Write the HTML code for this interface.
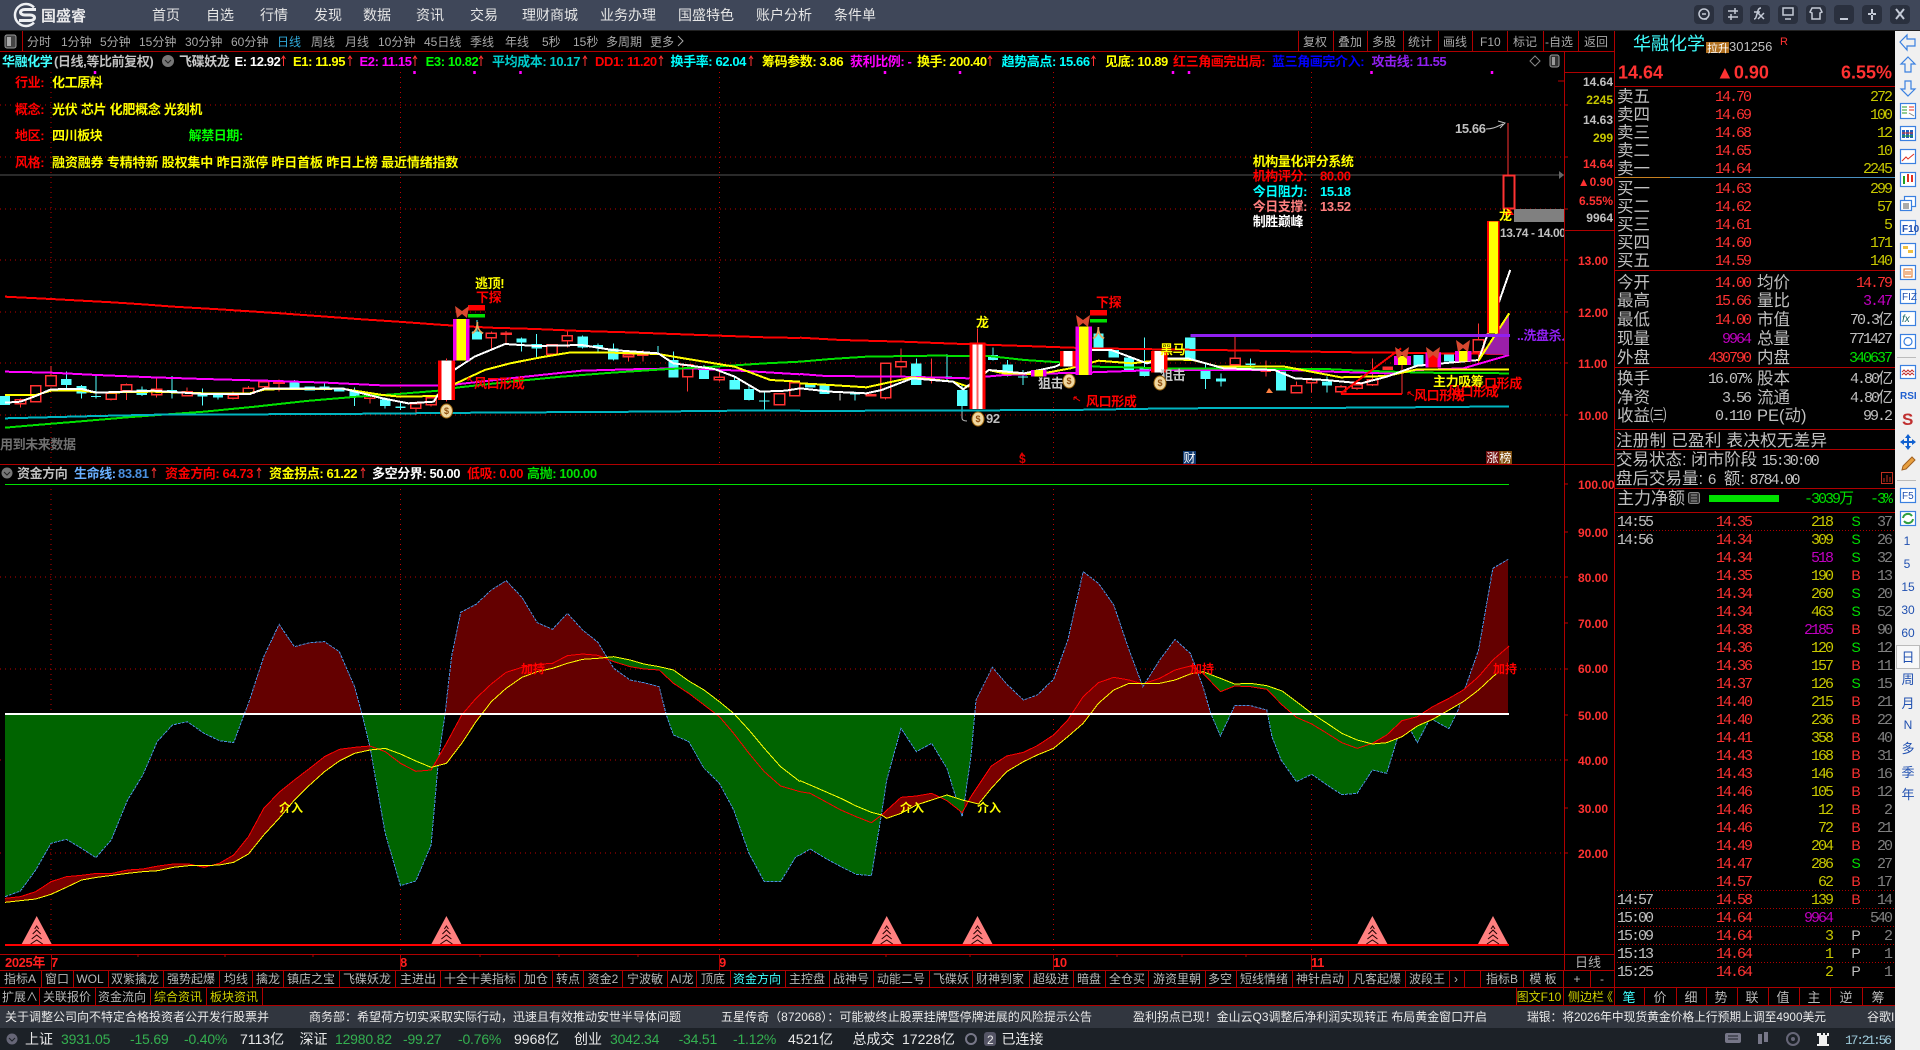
<!DOCTYPE html>
<html lang="zh"><head><meta charset="utf-8"><title>国盛睿</title>
<style>
html,body{margin:0;padding:0;background:#000;width:1920px;height:1050px;overflow:hidden}
svg{display:block}
text{font-family:"Liberation Sans","Noto Sans CJK SC",sans-serif;white-space:pre}
.b{font-weight:bold;font-size:13px;letter-spacing:-.4px}
.s{font-size:12px;fill:#b8b8b8}
.mid{text-anchor:middle}
.end{text-anchor:end}
.n{font-family:"Liberation Mono","Noto Sans CJK SC",monospace;font-size:15px;letter-spacing:-2px}
.n.end{transform:translateX(-2px)}
.l{font-size:16.5px;fill:#c0c0c0}
.ax{font-size:12px;font-weight:bold}
.ns{vector-effect:non-scaling-stroke;fill:none}
.r{fill:#ff3232}.y{fill:#c8c800}.g{fill:#c0c0c0}.m{fill:#c000c0}.gr{fill:#00e000}
.news{font-size:12px;fill:#e8e8e8}
.st{font-size:14px;fill:#e8e8e8}
.sg{font-size:14px;fill:#34b050;letter-spacing:-.2px}
</style></head><body>
<svg width="1920" height="1050" viewBox="0 0 1920 1050" xmlns="http://www.w3.org/2000/svg">
<defs>
<clipPath id="cA"><rect x="-20" y="-200" width="1700" height="902"/></clipPath>
<clipPath id="cB"><rect x="-20" y="702" width="1700" height="900"/></clipPath>
<clipPath id="r1"><path d="M0 0H725V1500H0zM845 0H1185V1500H845z"/></clipPath>
<clipPath id="g1"><path d="M725 0H845V1500H725zM1185 0H1600V1500H1185z"/></clipPath>
<clipPath id="r2"><path d="M160 0H272V1500H160zM322 0H782V1500H322zM1122 0H1420V1500H1122z"/></clipPath>
<clipPath id="g2"><path d="M-5 0H160V1500H-5zM272 0H322V1500H272zM782 0H1122V1500H782z"/></clipPath>
<clipPath id="cl"><rect x="0" y="50" width="1564" height="420"/></clipPath>
<path id="tri" d="M0 0L15 28H-15Z" fill="#ff8080"/>
<path id="chev" d="M-2 13L0 10L2 13M-4 18L0 14L4 18M-5 23L0 19L5 23M-6 28L0 24L6 28" fill="none" stroke="#200"/>
</defs>
<rect width="1920" height="1050" fill="#000"/>

<!-- dotted grid -->
<g stroke="#c00000" stroke-dasharray="1 4" shape-rendering="crispEdges" fill="none">
<path d="M0 105H1564M0 157H1564M0 209H1564M0 260H1564M0 312H1564M0 363H1564M0 415H1564M0 577H1564M0 669H1564M0 760H1564M0 853H1564"/>
<path d="M51 72V464M400.500 72V464M719.500 72V464M1053.500 72V464M1311.500 72V464M51 484V954M400.500 484V954M719.500 484V954M1053.500 484V954M1311.500 484V954"/>
</g>
<path d="M0 175H1564" stroke="#555" shape-rendering="crispEdges"/>
<path d="M95 71v3M414.500 71v3M474.500 71v3M520.500 71v3M885 71v3M960 71v3M1173 71v3M1189 71v3M1371.500 71v3M1492 71v3" stroke="#ff00ff" stroke-width="2.500"/>

<!-- UPPER CHART part 1 -->
<g transform="translate(0,270) scale(.5102,.33333)" shape-rendering="crispEdges">
<path class="ns" stroke="#54ffff" stroke-width="1" d="M130 305V355M160 345V385M188 318V385M278 350V378M337 318V385M397 355V407M427 370V388M577 330V355M636 338V362M695 352V408M755 382V415M785 395V420M935 150V208M1022 203V245M1052 192V262M1142 197V235M1172 220V250M1202 220V272M1290 228V255M1320 245V323M1380 285V327M1440 320V358M1468 345V392M1498 365V420"/>
<path fill="#54ffff" d="M0 378h20v27H0zM120 327h20v18h-20zM150 348h20v22h-20zM178 378h20v3h-20zM268 358h20v17h-20zM327 360h20v3h-20zM387 370h20v10h-20zM417 375h20v7h-20zM567 335h20v17h-20zM597 350h20v12h-20zM626 350h20v7h-20zM655 352h20v13h-20zM685 365h20v15h-20zM745 388h20v20h-20zM775 410h20v4h-20zM925 185h20v23h-20zM1012 205h20v13h-20zM1042 222h20v13h-20zM1132 200h20v32h-20zM1162 225h20v7h-20zM1192 235h20v33h-20zM1280 252h20v2h-20zM1310 270h20v53h-20zM1370 298h20v29h-20zM1430 330h20v28h-20zM1458 357h20v33h-20zM1488 392h20v3h-20z"/>
<path class="ns" stroke="#ff3232" stroke-width="1" d="M40 385V413M100 288V350M218 365V392M248 340V390M307 322V382M367 352V380M457 365V388M487 348V372M517 330V352M547 328V365M725 370V400M815 395V435M845 375V410M963 185V235M992 183V222M1082 222V255M1112 185V232M1232 245V275M1260 240V275M1348 285V365M1410 295V335"/>
<path class="ns" fill="#000" style="fill:#000" stroke="#ff3232" stroke-width="1.500" d="M30 390h20v12H30zM60 347h20v48H60zM90 318h20v29H90zM208 370h20v18h-20zM238 345h20v17h-20zM297 358h20v17h-20zM357 365h20v13h-20zM447 376h20v9h-20zM477 355h20v15h-20zM507 335h20v15h-20zM537 335h20v5h-20zM715 378h20v7h-20zM805 402h20v13h-20zM835 383h20v22h-20zM953 190h20v13h-20zM982 190h20v3h-20zM1072 225h20v28h-20zM1102 197h20v15h-20zM1222 255h20v5h-20zM1250 252h20v4h-20zM1338 285h20v35h-20zM1400 322h20v8h-20zM1518 372h20v33h-20zM1548 338h20v39h-20z"/>
<polyline class="ns" stroke="#ff0000" stroke-width="2" points="10,80 100,87 160,92 220,97 280,103 340,110 430,118 550,130 640,140 700,147 780,155 870,165 960,173 1050,177 1140,183 1230,187 1320,192 1410,197 1500,202 1568,204"/>
<polyline class="ns" stroke="#ff00ff" stroke-width="2" points="10,305 100,308 190,315 300,322 400,327 520,332 640,338 760,347 880,347 900,342 1000,325 1060,315 1140,302 1260,297 1350,295 1450,302 1568,313"/>
<polyline class="ns" stroke="#00e000" stroke-width="2" points="10,473 70,465 150,455 250,442 310,435 400,425 500,410 600,393 700,380 780,372 860,362 900,352 1000,335 1100,320 1200,308 1300,298 1400,290 1500,280 1568,275"/>
<polyline class="ns" stroke="#00b4c0" stroke-width="2" points="10,445 190,438 310,434 660,432 940,428 1260,425 1440,422 1568,422"/>
<polyline class="ns" stroke="#ffff00" stroke-width="2" points="10,375 70,375 100,362 160,362 190,368 300,365 400,370 490,370 520,358 670,356 750,375 785,380 855,378 880,350 950,300 1000,280 1060,262 1115,248 1200,248 1290,252 1340,265 1440,290 1510,330 1568,335"/>
<polyline class="ns" stroke="#ffffff" stroke-width="2" points="10,398 40,395 70,378 100,358 160,357 190,368 300,362 400,372 490,372 520,355 670,355 750,385 800,400 850,395 890,300 930,260 990,222 1050,228 1140,225 1200,240 1290,250 1320,280 1400,297 1440,320 1490,365 1540,362 1568,355"/>
<path fill="#ff0000" d="M858 272h34v118h-34z"/><path fill="#fff" d="M865 272h20v118h-20z"/><path stroke="#ff3232" class="ns" d="M875 265v8M875 390v5"/>
<path fill="#f000f0" d="M888 147h32v125h-32z"/><path fill="#ffff00" d="M895 147h18v125h-18z"/>
<path fill="#ff0000" d="M917 105h34v17h-34z"/><path fill="#00e000" d="M917 132h34v11h-34z"/>
</g>

<!-- UPPER CHART part 2 -->
<g transform="translate(800,270) scale(.5102,.33333)" shape-rendering="crispEdges">
<path class="ns" stroke="#54ffff" stroke-width="1" d="M108 365V392M228 265V345M288 252V330M318 340V440M378 232V272M407 270V320M437 300V345M675 202V320M795 280V357M825 310V350M883 265V290M1033 320V368"/>
<path class="ns" stroke="#ddd" stroke-width="1" d="M78 370V392"/>
<path fill="#54ffff" d="M10 340h20v12H10zM38 345h20v27H38zM98 368h20v5H98zM218 280h20v65h-20zM278 320h20v5h-20zM308 360h20v48h-20zM368 255h20v15h-20zM397 283h20v32h-20zM427 320h20v2h-20zM575 190h20v45h-20zM605 240h20v22h-20zM635 262h20v38h-20zM665 295h20v23h-20zM755 203h20v67h-20zM785 303h20v24h-20zM815 325h20v10h-20zM873 280h20v5h-20zM933 305h20v57h-20zM1023 335h20v12h-20zM1202 255h20v35h-20zM1262 252h20v23h-20z"/>
<path fill="#ddd" d="M70 365h17v4H70z"/>
<path class="ns" stroke="#ff3232" stroke-width="1" d="M198 235V320M258 265V340M853 200V300M913 272V320M973 335V370M1003 325V368M1060 345V370M1092 338V360M1122 265V348M1330 160V280M348 175V218M168 280V388M1180 285V372"/>
<path class="ns" style="fill:#000" stroke="#ff3232" stroke-width="1.500" d="M158 280h20v103h-20zM188 275h20v15h-20zM843 265h20v20h-20zM963 348h20v20h-20zM993 330h20v8h-20zM1050 350h20v15h-20zM1082 345h20v10h-20zM1112 330h20v15h-20zM1320 210h20v35h-20z"/>
<path fill="#ff3232" d="M128 372h22v8h-22zM903 302h20v4h-20zM1142 290h20v10h-20z"/>
<polyline class="ns" stroke="#ff0000" stroke-width="2" points="0,203 80,210 200,215 320,222 440,228 570,235 700,238 850,241 970,244 1090,247 1210,249 1330,251 1390,252"/>
<polyline class="ns" stroke="#ff00ff" stroke-width="2" points="0,312 50,318 200,320 330,325 400,315 500,310 570,307 700,300 830,300 950,300 1060,306 1150,310 1210,300 1300,295 1390,255"/>
<polyline class="ns" stroke="#00e000" stroke-width="2" points="0,275 60,267 130,260 260,257 370,258 440,270 510,277 580,290 640,292 720,295 840,296 1030,297 1100,302 1220,308 1390,310"/>
<polyline class="ns" stroke="#00b4c0" stroke-width="2" points="0,423 525,420 735,415 1120,413 1330,410 1390,410"/>
<polyline class="ns" stroke="#ffff00" stroke-width="2" points="0,340 60,345 130,352 220,322 300,335 330,350 370,300 400,310 470,312 530,295 585,272 650,280 720,268 770,270 820,290 950,290 1060,322 1150,318 1210,298 1390,298"/>
<polyline class="ns" stroke="#ffffff" stroke-width="2" points="0,355 60,365 130,370 160,360 220,325 300,335 320,358 370,300 440,310 500,290 570,240 610,240 680,280 720,265 760,265 830,295 930,300 970,325 1030,330 1100,340 1150,320 1210,287 1330,270 1392,0"/>
<path fill="#9b1fa8" d="M1340 252L1390 132V255Z"/>
<path class="ns" stroke="#ffff00" stroke-width="2" d="M1330 272L1390 130"/>
<path class="ns" stroke="#9020f0" stroke-width="3" d="M765 196H1392"/>
<path class="ns" stroke="#ff0000" stroke-width="2" d="M1060 370L1178 235M1060 372H1180"/>
<path fill="#ff0000" d="M332 218h32v199h-32z"/><path fill="#fff" d="M338 224h20v193h-20z"/><path fill="#ff6060" d="M346 224h4v193h-4z"/>
<path fill="#f000f0" d="M453 300h30v20h-30z"/><path fill="#ffff00" d="M460 300h16v20h-16z"/>
<path fill="#ff0000" d="M510 243h30v47h-30z"/><path fill="#fff" d="M516 243h18v47h-18z"/>
<path fill="#f000f0" d="M540 170h32v145h-32z"/><path fill="#ffff00" d="M547 170h18v145h-18z"/>
<path fill="#ff0000" d="M688 243h32v65h-32z"/><path fill="#fff" d="M695 243h18v65h-18z"/>
<path fill="#f000f0" d="M1164 258h34v27h-34z"/><path fill="#ffff00" d="M1172 258h18v27h-18z"/>
<path fill="#f000f0" d="M1226 248h30v44h-30z"/><path fill="#ff0000" d="M1232 248h18v44h-18z"/>
<path fill="#f000f0" d="M1284 243h32v32h-32z"/><path fill="#ffff00" d="M1292 243h16v32h-16z"/>
<path fill="#ff0000" d="M568 120h34v17h-34z"/><path fill="#00e000" d="M568 147h34v11h-34z"/>
<path fill="#ff0000" d="M1347 -147h24v337h-24z"/><path fill="#ffff00" d="M1350 -145h18v335h-18z"/>
</g>

<!-- Last candle etc (page coords) -->
<g shape-rendering="crispEdges">
<rect x="1514" y="209" width="50" height="13" fill="#808080"/>
<path d="M1508 123V175" stroke="#ff3232"/>
<rect x="1503.500" y="175.500" width="11" height="33" fill="#000" stroke="#ff3232" stroke-width="2"/>
</g>
<path d="M1509 207l5 8h-10z" fill="#ff0000"/>
<path d="M1486 129c8 0 12-3 17-5M1498 121l7 2-5 5" stroke="#c0c0c0" fill="none"/>
<text x="1455" y="133" class="b" fill="#c0c0c0">15.66</text>
<text x="1499" y="220" class="b" fill="#ffff00">龙</text>
<text x="1500" y="237" class="b" fill="#c0c0c0" style="font-size:12px" clip-path="url(#cl)">13.74 - 14.00</text>
<g class="b">
<text x="1252.700" y="166" fill="#ffff00">机构量化评分系统</text>
<text x="1252.700" y="180.500" fill="#ff0000">机构评分:</text><text x="1320" y="180.500" fill="#ff0000">80.00</text>
<text x="1252.700" y="196" fill="#00ffff">今日阻力:</text><text x="1320" y="196" fill="#00ffff">15.18</text>
<text x="1252.700" y="211" fill="#ff8080">今日支撑:</text><text x="1320" y="211" fill="#ff8080">13.52</text>
<text x="1252.700" y="226" fill="#ffffff">制胜巅峰</text>
</g>

<!-- annotations upper -->
<g class="b">
<text x="475" y="288" fill="#ffff00">逃顶!</text>
<text x="476" y="302" fill="#ff0000">下探</text>
<text x="1096" y="307" fill="#ff0000">下探</text>
<text x="976" y="327" fill="#ffff00">龙</text>
<text x="1160" y="354" fill="#ffff00">黑马</text>
<text x="1038" y="388" fill="#c8c8c8">狙击</text>
<text x="1160" y="380" fill="#c8c8c8">狙击</text>
<text x="1086" y="406" fill="#ff0000">风口形成</text>
<text x="1414" y="400" fill="#ff0000">风口形成</text>
<text x="1448" y="396" fill="#ff0000">风口形成</text>
<text x="1433" y="386" fill="#ffff00">主力吸筹</text>
<text x="1484" y="388" fill="#ff0000">口形成</text>
<text x="474" y="388" fill="#ff0000">风口形成</text>
<text x="1517" y="340" fill="#9020f0" clip-path="url(#cl)">..洗盘杀入</text>
<text x="986" y="423" fill="#c0c0c0">92</text>
<text x="0" y="449" fill="#707070">用到未来数据</text>
</g>
<path d="M1074 397l6 4M1074 397v3M1074 397h3M1408 392l6 4M1408 392v3M1408 392h3M468 378l5 4M468 378v3M468 378h3" stroke="#ff0000" fill="none"/>
<path d="M962 412v6c0 2 2 3 5 3" stroke="#bbb" fill="none"/>
<g fill="#d84830">
<path d="M455 306l7 5 7-5-2 12-5-4-5 4z"/><path d="M1076 315l7 5 7-5-2 12-5-4-5 4z"/>
<path d="M1395 347l7 5 7-5-2 12-5-4-5 4z"/><path d="M1426 347l7 5 7-5-2 12-5-4-5 4z"/><path d="M1456 340l7 5 7-5-2 12-5-4-5 4z"/>
</g>
<g font-weight="bold" fill="#e8a860" font-size="13"><text x="471" y="333">人</text><text x="1092" y="338">人</text></g>
<g fill="#f0d8a0" stroke="#a06810">
<ellipse cx="446.500" cy="411" rx="6" ry="7"/><ellipse cx="978" cy="419" rx="6" ry="7"/><ellipse cx="1069" cy="381" rx="6" ry="7"/><ellipse cx="1160" cy="383" rx="6" ry="7"/>
</g>
<g font-size="9" font-weight="bold" fill="#905010" text-anchor="middle"><text x="446.500" y="414">$</text><text x="978" y="422">$</text><text x="1069" y="384">$</text><text x="1160" y="386">$</text></g>
<path d="M1266 453l3-5 4 5z" fill="#ff8040" transform="translate(0,-60)"/>
<text x="1019" y="463" class="b" fill="#e00000" style="font-size:12px">$</text>
<path d="M1022 452l-2 3h4z" fill="#e00000"/>
<rect x="1183" y="451" width="13" height="13" fill="#103a70"/><text x="1183.500" y="462" fill="#fff" font-size="12">财</text>
<rect x="1486" y="451" width="13" height="13" fill="#701010"/><rect x="1499" y="451" width="13" height="13" fill="#805010"/>
<text x="1486.500" y="462" fill="#fff" font-size="12">涨</text><text x="1499.500" y="462" fill="#fff" font-size="12">榜</text>

<!-- LOWER CHART part 1 -->
<g transform="translate(0,480) scale(.5102,.33333)" shape-rendering="crispEdges">
<polygon clip-path="url(#cA)" fill="#640000" points="10,702 10,1250 40,1233 70,1170 100,1090 130,1078 160,1105 188,1133 218,1080 250,960 280,885 308,785 338,735 367,725 400,760 430,782 458,788 478,705 487,670 517,530 547,433 577,500 607,488 636,485 665,515 695,620 710,705 725,800 755,1060 785,1217 815,1203 845,1095 860,830 872,705 885,530 903,397 933,373 963,330 992,302 1023,352 1053,428 1083,448 1112,400 1142,450 1172,487 1203,565 1235,600 1262,608 1292,620 1306,705 1320,765 1350,785 1380,865 1410,910 1438,990 1468,1120 1498,1205 1530,1205 1560,1130 1568,1125 1568,702"/>
<polygon clip-path="url(#cB)" fill="#006400" points="10,702 10,1250 40,1233 70,1170 100,1090 130,1078 160,1105 188,1133 218,1080 250,960 280,885 308,785 338,735 367,725 400,760 430,782 458,788 478,705 487,670 517,530 547,433 577,500 607,488 636,485 665,515 695,620 710,705 725,800 755,1060 785,1217 815,1203 845,1095 860,830 872,705 885,530 903,397 933,373 963,330 992,302 1023,352 1053,428 1083,448 1112,400 1142,450 1172,487 1203,565 1235,600 1262,608 1292,620 1306,705 1320,765 1350,785 1380,865 1410,910 1438,990 1468,1120 1498,1205 1530,1205 1560,1130 1568,1125 1568,702"/>
<polyline class="ns" stroke="#4a90e0" stroke-width="1" stroke-dasharray="3 1" points="10,1250 40,1233 70,1170 100,1090 130,1078 160,1105 188,1133 218,1080 250,960 280,885 308,785 338,735 367,725 400,760 430,782 458,788 478,705 487,670 517,530 547,433 577,500 607,488 636,485 665,515 695,620 710,705 725,800 755,1060 785,1217 815,1203 845,1095 860,830 872,705 885,530 903,397 933,373 963,330 992,302 1023,352 1053,428 1083,448 1112,400 1142,450 1172,487 1203,565 1235,600 1262,608 1292,620 1306,705 1320,765 1350,785 1380,865 1410,910 1438,990 1468,1120 1498,1205 1530,1205 1560,1130 1568,1125"/>
<g fill-rule="evenodd">
<path clip-path="url(#r1)" fill="#7a0000" fill-rule="evenodd" d="M10 1255L40 1250 70 1235 100 1205 130 1190 160 1186 190 1180 220 1180 250 1170 280 1167 310 1158 340 1152 370 1152 400 1162 430 1150 458 1125 487 1070 517 985 547 937 577 900 607 865 636 830 665 808 695 802 725 798 755 815 785 850 815 874 845 870 875 790 905 705 933 655 963 612 992 577 1023 562 1053 553 1083 550 1112 527 1142 522 1172 526 1203 545 1235 560 1262 567 1292 570 1320 610 1350 640 1380 675 1410 710 1438 760 1468 820 1498 875 1530 918 1568 935V1500H10ZM10 1267L40 1262 70 1257 100 1243 130 1222 160 1200 190 1192 220 1186 250 1180 280 1175 310 1172 340 1162 370 1157 400 1157 430 1155 458 1147 487 1122 517 1065 547 1015 577 960 607 915 636 875 665 843 695 820 725 810 755 805 785 822 815 843 845 862 875 850 905 790 933 725 963 665 992 625 1023 592 1053 575 1083 565 1112 550 1142 538 1172 535 1203 530 1235 540 1262 552 1292 560 1320 570 1350 603 1380 630 1410 665 1438 700 1468 750 1498 805 1530 860 1568 905V1500H10Z"/>
<path clip-path="url(#g1)" fill="#006400" fill-rule="evenodd" d="M10 1255L40 1250 70 1235 100 1205 130 1190 160 1186 190 1180 220 1180 250 1170 280 1167 310 1158 340 1152 370 1152 400 1162 430 1150 458 1125 487 1070 517 985 547 937 577 900 607 865 636 830 665 808 695 802 725 798 755 815 785 850 815 874 845 870 875 790 905 705 933 655 963 612 992 577 1023 562 1053 553 1083 550 1112 527 1142 522 1172 526 1203 545 1235 560 1262 567 1292 570 1320 610 1350 640 1380 675 1410 710 1438 760 1468 820 1498 875 1530 918 1568 935V1500H10ZM10 1267L40 1262 70 1257 100 1243 130 1222 160 1200 190 1192 220 1186 250 1180 280 1175 310 1172 340 1162 370 1157 400 1157 430 1155 458 1147 487 1122 517 1065 547 1015 577 960 607 915 636 875 665 843 695 820 725 810 755 805 785 822 815 843 845 862 875 850 905 790 933 725 963 665 992 625 1023 592 1053 575 1083 565 1112 550 1142 538 1172 535 1203 530 1235 540 1262 552 1292 560 1320 570 1350 603 1380 630 1410 665 1438 700 1468 750 1498 805 1530 860 1568 905V1500H10Z"/>
</g>
<polyline class="ns" stroke="#ff0000" stroke-width="1" points="10,1255 40,1250 70,1235 100,1205 130,1190 160,1186 190,1180 220,1180 250,1170 280,1167 310,1158 340,1152 370,1152 400,1162 430,1150 458,1125 487,1070 517,985 547,937 577,900 607,865 636,830 665,808 695,802 725,798 755,815 785,850 815,874 845,870 875,790 905,705 933,655 963,612 992,577 1023,562 1053,553 1083,550 1112,527 1142,522 1172,526 1203,545 1235,560 1262,567 1292,570 1320,610 1350,640 1380,675 1410,710 1438,760 1468,820 1498,875 1530,918 1568,935"/>
<polyline class="ns" stroke="#ffff00" stroke-width="1" points="10,1267 40,1262 70,1257 100,1243 130,1222 160,1200 190,1192 220,1186 250,1180 280,1175 310,1172 340,1162 370,1157 400,1157 430,1155 458,1147 487,1122 517,1065 547,1015 577,960 607,915 636,875 665,843 695,820 725,810 755,805 785,822 815,843 845,862 875,850 905,790 933,725 963,665 992,625 1023,592 1053,575 1083,565 1112,550 1142,538 1172,535 1203,530 1235,540 1262,552 1292,560 1320,570 1350,603 1380,630 1410,665 1438,700 1468,750 1498,805 1530,860 1568,905"/>
</g>

<!-- LOWER CHART part 2 -->
<g transform="translate(800,480) scale(.5102,.33333)" shape-rendering="crispEdges">
<polygon clip-path="url(#cA)" fill="#640000" points="0,702 0,1125 20,1107 50,1135 80,1160 110,1183 140,1187 160,1000 170,900 198,745 228,815 258,790 288,865 305,950 318,1010 335,830 345,660 377,562 405,612 438,660 465,645 497,598 525,480 555,275 585,310 615,375 645,510 672,620 705,540 735,478 765,520 790,620 805,700 824,768 845,702 852,677 883,677 915,690 925,770 943,840 973,905 1003,883 1033,915 1062,944 1092,940 1122,870 1150,880 1170,780 1180,730 1195,745 1210,788 1235,715 1272,746 1290,690 1300,640 1330,510 1358,265 1388,238 1388,702"/>
<polygon clip-path="url(#cB)" fill="#006400" points="0,702 0,1125 20,1107 50,1135 80,1160 110,1183 140,1187 160,1000 170,900 198,745 228,815 258,790 288,865 305,950 318,1010 335,830 345,660 377,562 405,612 438,660 465,645 497,598 525,480 555,275 585,310 615,375 645,510 672,620 705,540 735,478 765,520 790,620 805,700 824,768 845,702 852,677 883,677 915,690 925,770 943,840 973,905 1003,883 1033,915 1062,944 1092,940 1122,870 1150,880 1170,780 1180,730 1195,745 1210,788 1235,715 1272,746 1290,690 1300,640 1330,510 1358,265 1388,238 1388,702"/>
<polyline class="ns" stroke="#4a90e0" stroke-width="1" stroke-dasharray="3 1" points="0,1125 20,1107 50,1135 80,1160 110,1183 140,1187 160,1000 170,900 198,745 228,815 258,790 288,865 305,950 318,1010 335,830 345,660 377,562 405,612 438,660 465,645 497,598 525,480 555,275 585,310 615,375 645,510 672,620 705,540 735,478 765,520 790,620 805,700 824,768 852,677 883,677 915,690 925,770 943,840 973,905 1003,883 1033,915 1062,944 1092,940 1122,870 1150,880 1170,780 1180,730 1195,745 1210,788 1235,715 1272,746 1290,690 1300,640 1330,510 1358,265 1388,238"/>
<path clip-path="url(#r2)" fill="#7a0000" fill-rule="evenodd" d="M0 935L20 940 50 965 80 990 110 1010 140 1028 160 1005 198 952 228 948 258 940 288 962 318 998 335 950 375 858 405 828 438 817 465 797 497 765 525 720 555 650 585 608 615 592 645 600 672 612 705 595 735 570 765 558 790 580 824 635 852 618 883 620 915 628 945 675 973 712 1003 732 1033 760 1062 788 1092 805 1122 790 1150 765 1180 722 1210 710 1240 680 1272 655 1300 630 1330 590 1358 540 1390 498V1500H0ZM0 902L20 915 50 935 80 955 110 978 140 997 160 1005 170 1015 198 1000 228 975 258 960 288 945 318 960 350 972 375 925 405 875 438 845 465 825 497 805 525 770 555 730 585 670 615 630 645 610 672 610 705 610 735 600 765 582 790 575 824 595 852 612 883 610 915 617 945 633 973 665 1003 700 1033 730 1062 760 1092 780 1122 792 1150 788 1180 770 1210 738 1240 718 1272 690 1300 665 1330 630 1358 590 1390 545V1500H0Z"/>
<path clip-path="url(#g2)" fill="#006400" fill-rule="evenodd" d="M0 935L20 940 50 965 80 990 110 1010 140 1028 160 1005 198 952 228 948 258 940 288 962 318 998 335 950 375 858 405 828 438 817 465 797 497 765 525 720 555 650 585 608 615 592 645 600 672 612 705 595 735 570 765 558 790 580 824 635 852 618 883 620 915 628 945 675 973 712 1003 732 1033 760 1062 788 1092 805 1122 790 1150 765 1180 722 1210 710 1240 680 1272 655 1300 630 1330 590 1358 540 1390 498V1500H0ZM0 902L20 915 50 935 80 955 110 978 140 997 160 1005 170 1015 198 1000 228 975 258 960 288 945 318 960 350 972 375 925 405 875 438 845 465 825 497 805 525 770 555 730 585 670 615 630 645 610 672 610 705 610 735 600 765 582 790 575 824 595 852 612 883 610 915 617 945 633 973 665 1003 700 1033 730 1062 760 1092 780 1122 792 1150 788 1180 770 1210 738 1240 718 1272 690 1300 665 1330 630 1358 590 1390 545V1500H0Z"/>
<polyline class="ns" stroke="#ff0000" stroke-width="1" points="0,935 20,940 50,965 80,990 110,1010 140,1028 160,1005 198,952 228,948 258,940 288,962 318,998 335,950 375,858 405,828 438,817 465,797 497,765 525,720 555,650 585,608 615,592 645,600 672,612 705,595 735,570 765,558 790,580 824,635 852,618 883,620 915,628 945,675 973,712 1003,732 1033,760 1062,788 1092,805 1122,790 1150,765 1180,722 1210,710 1240,680 1272,655 1300,630 1330,590 1358,540 1390,498"/>
<polyline class="ns" stroke="#ffff00" stroke-width="1" points="0,902 20,915 50,935 80,955 110,978 140,997 160,1005 170,1015 198,1000 228,975 258,960 288,945 318,960 350,972 375,925 405,875 438,845 465,825 497,805 525,770 555,730 585,670 615,630 645,610 672,610 705,610 735,600 765,582 790,575 824,595 852,612 883,610 915,617 945,633 973,665 1003,700 1033,730 1062,760 1092,780 1122,792 1150,788 1180,770 1210,738 1240,718 1272,690 1300,665 1330,630 1358,590 1370,575"/>
</g>

<path d="M5 484.500H1509" stroke="#00e000" shape-rendering="crispEdges"/>
<path d="M5 714H1509" stroke="#fff" stroke-width="2" shape-rendering="crispEdges"/>
<path d="M5 945H1509" stroke="#ff0000" stroke-width="2" shape-rendering="crispEdges"/>
<g font-size="12" font-weight="bold" fill="#ffff00"><text x="279" y="812">介入</text><text x="900" y="812">介入</text><text x="977" y="812">介入</text></g>
<g font-size="12" font-weight="bold" fill="#ff0000"><text x="521" y="673">加持</text><text x="1190" y="673">加持</text><text x="1493" y="673">加持</text></g>
<g>
<g transform="translate(36.700,916)"><use href="#tri"/><use href="#chev"/></g>
<g transform="translate(446.400,916)"><use href="#tri"/><use href="#chev"/></g>
<g transform="translate(886.700,916)"><use href="#tri"/><use href="#chev"/></g>
<g transform="translate(977.500,916)"><use href="#tri"/><use href="#chev"/></g>
<g transform="translate(1372.400,916)"><use href="#tri"/><use href="#chev"/></g>
<g transform="translate(1493,916)"><use href="#tri"/><use href="#chev"/></g>
</g>

<!-- Structure lines -->
<g stroke="#b00000" shape-rendering="crispEdges" fill="none">
<path d="M0 51.500H1614M0 464.500H1614M1564.500 52V970M1564 72.500H1614M1564 230.500H1614M0 954.500H1614M0 970.500H1614M0 987.500H1895M0 1005.500H1895"/>
</g>
<path d="M1564 105h4M1564 157h4M1564 209h4M1564 260h4M1564 312h4M1564 363h4M1564 415h4M1564 484h4M1564 532h4M1564 577h4M1564 623h4M1564 669h4M1564 715h4M1564 760h4M1564 808h4M1564 853h4M1564 81h-6" stroke="#c00000" shape-rendering="crispEdges"/>
<path d="M1564 175l-5-4v8z" fill="#666"/>

<!-- Axis labels -->
<g class="ax">
<text x="1613" y="86" class="end g">14.64</text><text x="1613" y="104" class="end y">2245</text><text x="1613" y="124" class="end g">14.63</text><text x="1613" y="142" class="end y">299</text>
<text x="1613" y="168" class="end r">14.64</text><text x="1613" y="186" class="end r">▲0.90</text><text x="1613" y="205" class="end r">6.55%</text><text x="1613" y="222" class="end g">9964</text>
<text x="1578" y="265" class="r">13.00</text><text x="1578" y="317" class="r">12.00</text><text x="1578" y="368" class="r">11.00</text><text x="1578" y="420" class="r">10.00</text>
<text x="1578" y="489" class="r">100.00</text><text x="1578" y="537" class="r">90.00</text><text x="1578" y="582" class="r">80.00</text><text x="1578" y="628" class="r">70.00</text><text x="1578" y="673" class="r">60.00</text><text x="1578" y="720" class="r">50.00</text><text x="1578" y="765" class="r">40.00</text><text x="1578" y="813" class="r">30.00</text><text x="1578" y="858" class="r">20.00</text>
</g>

<!-- Info row -->
<g class="b">
<text x="2" y="66" fill="#40ffff">华融化学</text><text x="54" y="66" fill="#c0c0c0">(日线,等比前复权)</text>
<text x="179" y="66" fill="#c8c8c8">飞碟妖龙</text>
<text x="234.500" y="66" fill="#ffffff">E: 12.92</text><text x="293" y="66" fill="#ffff00">E1: 11.95</text><text x="359.500" y="66" fill="#ff00ff">E2: 11.15</text><text x="425.600" y="66" fill="#00ff00">E3: 10.82</text>
<text x="492" y="66" fill="#00cccc">平均成本: 10.17</text><text x="595" y="66" fill="#ff0000">DD1: 11.20</text><text x="670.500" y="66" fill="#00ffff">换手率: 62.04</text><text x="762" y="66" fill="#ffff00">筹码参数: 3.86</text><text x="850" y="66" fill="#ff00ff">获利比例: -</text><text x="917" y="66" fill="#ffff00">换手: 200.40</text>
<text x="1001.600" y="66" fill="#00ffff">趋势高点: 15.66</text><text x="1105" y="66" fill="#ffff00">见底: 10.89</text><text x="1173" y="66" fill="#ff0000">红三角画完出局:</text><text x="1272" y="66" fill="#0000ff">蓝三角画完介入:</text><text x="1371.500" y="66" fill="#9020f0">攻击线: 11.55</text>
<text x="15" y="87" fill="#ff0000">行业:</text><text x="52" y="87" fill="#ffff00">化工原料</text>
<text x="15" y="114" fill="#ff0000">概念:</text><text x="52" y="114" fill="#ffff00" textLength="150">光伏 芯片 化肥概念 光刻机</text>
<text x="15" y="140" fill="#ff0000">地区:</text><text x="52" y="140" fill="#ffff00">四川板块</text><text x="188.600" y="140" fill="#00ff00">解禁日期:</text>
<text x="15" y="167" fill="#ff0000">风格:</text><text x="52" y="167" fill="#ffff00" textLength="406">融资融券 专精特新 股权集中 昨日涨停 昨日首板 昨日上榜 最近情绪指数</text>
<text x="17" y="478" fill="#c0c0c0">资金方向</text><text x="74" y="478" fill="#6ab0ff">生命线:</text><text x="118" y="478" fill="#4a90e0">83.81</text>
<text x="165" y="478" fill="#ff0000">资金方向: 64.73</text><text x="269" y="478" fill="#ffff00">资金拐点: 61.22</text><text x="372" y="478" fill="#ffffff">多空分界: 50.00</text><text x="467" y="478" fill="#ff0000">低吸: 0.00</text><text x="527" y="478" fill="#00e000">高抛: 100.00</text>
</g>
<path d="M283.500 57v9M350 57v9M415 57v9M481 57v9M585 57v9M661 57v9M751 57v9M990 57v9M1093.500 57v9M154 469v9M259 469v9" stroke="#ff3232" fill="none"/>
<path d="M281.500 59l2-3 2 3M348 59l2-3 2 3M413 59l2-3 2 3M479 59l2-3 2 3M583 59l2-3 2 3M659 59l2-3 2 3M749 59l2-3 2 3M988 59l2-3 2 3M1091.500 59l2-3 2 3M152 471l2-3 2 3M257 471l2-3 2 3" stroke="#ff3232" fill="none"/>
<path d="M363 469v9M361 471l2-3 2 3" stroke="#ff3232" fill="none"/>
<circle cx="168" cy="61" r="6" fill="#777"/><path d="M165 60l3 3 3-3" stroke="#222" fill="none"/>
<circle cx="7" cy="473" r="5.500" fill="#777"/><path d="M4 472l3 3 3-3" stroke="#222" fill="none"/>
<path d="M1535 56l5 5-5 5-5-5z" stroke="#888" fill="none"/><rect x="1550" y="55" width="9" height="12" rx="2" fill="#333" stroke="#999"/><rect x="1552" y="57" width="3" height="8" fill="#999"/>

<!-- Date row -->
<g class="b" fill="#ff2020" style="font-size:13px"><text x="5" y="967">2025年</text><text x="51" y="967">7</text><text x="400" y="967">8</text><text x="719" y="967">9</text><text x="1053" y="967">10</text><text x="1311" y="967">11</text></g>
<text x="1575" y="967" font-size="13" fill="#b0b0b0">日线</text>
<path d="M51.500 954v16M400.500 954v16M719.500 954v16M1053.500 954v16M1311.500 954v16M138 954v3M225 954v3M313 954v3M480 954v3M559 954v3M638 954v3M886 954v3M970 954v3M1117 954v3M1182 954v3M1246 954v3" stroke="#b00000" shape-rendering="crispEdges"/>

<!-- Tabs -->
<g class="s mid">
<text x="20" y="983" class="s mid">指标A</text><text x="57" y="983" class="s mid">窗口</text><text x="90" y="983" class="s mid">WOL</text><text x="135" y="983" class="s mid">双紫擒龙</text><text x="191" y="983" class="s mid">强势起爆</text><text x="236" y="983" class="s mid">均线</text><text x="268" y="983" class="s mid">擒龙</text><text x="311" y="983" class="s mid">镇店之宝</text><text x="367" y="983" class="s mid">飞碟妖龙</text><text x="418" y="983" class="s mid">主进出</text><text x="480" y="983" class="s mid">十全十美指标</text><text x="536" y="983" class="s mid">加仓</text><text x="568" y="983" class="s mid">转点</text><text x="603" y="983" class="s mid">资金2</text><text x="645" y="983" class="s mid">宁波敏</text><text x="682" y="983" class="s mid">AI龙</text><text x="713" y="983" class="s mid">顶底</text><text x="757" y="983" class="mid" font-size="12" fill="#40ffff">资金方向</text>
<text x="807" y="983" class="s mid">主控盘</text><text x="851" y="983" class="s mid">战神号</text><text x="901" y="983" class="s mid">动能二号</text><text x="951" y="983" class="s mid">飞碟妖</text><text x="1000" y="983" class="s mid">财神到家</text><text x="1051" y="983" class="s mid">超级进</text><text x="1089" y="983" class="s mid">暗盘</text><text x="1127" y="983" class="s mid">全仓买</text><text x="1177" y="983" class="s mid">游资里朝</text><text x="1220" y="983" class="s mid">多空</text><text x="1264" y="983" class="s mid">短线情绪</text><text x="1320" y="983" class="s mid">神针启动</text><text x="1377" y="983" class="s mid">凡客起爆</text><text x="1427" y="983" class="s mid">波段王</text><text x="1456" y="983" class="s mid">›</text><text x="1502" y="983" class="s mid">指标B</text><text x="1543" y="983" class="s mid">模 板</text><text x="1577" y="983" class="s mid">+</text><text x="1602" y="983" class="s mid">-</text>
<text x="20" y="1001" class="s mid">扩展∧</text><text x="67" y="1001" class="s mid">关联报价</text><text x="122" y="1001" class="s mid">资金流向</text><text x="178" y="1001" class="mid" font-size="12" fill="#d0d000">综合资讯</text><text x="234" y="1001" class="mid" font-size="12" fill="#d0d000">板块资讯</text><text x="1539" y="1001" class="mid" font-size="12" fill="#d0d000">图文F10</text><text x="1586" y="1001" class="mid" font-size="12" fill="#d0d000">侧边栏</text>
<text x="1607" y="1001" class="mid" font-size="12" fill="#d0d000">《</text>
</g>
<path d="M41.500 970v17M73.500 970v17M108.500 970v17M163.500 970v17M219.500 970v17M252.500 970v17M283.500 970v17M339.500 970v17M395.500 970v17M440.500 970v17M519.500 970v17M552.500 970v17M583.500 970v17M622.500 970v17M667.500 970v17M696.500 970v17M730.500 970v17M785.500 970v17M829.500 970v17M873.500 970v17M929.500 970v17M972.500 970v17M1029.500 970v17M1073.500 970v17M1105.500 970v17M1148.500 970v17M1205.500 970v17M1236.500 970v17M1292.500 970v17M1348.500 970v17M1405.500 970v17M1449.500 970v17M1464.500 970v17M1480.500 970v17M1523.500 970v17M1563.500 970v17M1590.500 970v17M39.500 987v18M95.500 987v18M150.500 987v18M206.500 987v18M262.500 987v18M1516.500 987v18M1563.500 987v18" stroke="#b00000" shape-rendering="crispEdges"/>

<!-- Right panel -->
<rect x="1615" y="31" width="280" height="956" fill="#000"/>
<path d="M1614.500 31V1005M1298.500 31v20M1333.500 31v20M1367.500 31v20M1403.500 31v20M1438.500 31v20M1472.500 31v20M1507.500 31v20M1543.500 31v20M1578.500 31v20" stroke="#b00000" shape-rendering="crispEdges"/>
<path d="M1615 86.500H1895M1615 270.500H1895M1615 367.500H1895M1615 429.500H1895M1615 449.500H1895M1615 488.500H1895M1615 512.500H1895M1615 987.500H1895" stroke="#b00000" shape-rendering="crispEdges"/>
<path d="M1615 177.500H1670" stroke="#c88020" shape-rendering="crispEdges"/><path d="M1670 177.500H1895" stroke="#4a90c0" shape-rendering="crispEdges"/>
<path d="M1617 530.500H1895M1617 890.500H1895M1617 908.500H1895M1617 926.500H1895M1617 944.500H1895M1617 962.500H1895" stroke="#b00000" stroke-dasharray="1 2" shape-rendering="crispEdges"/>

<text x="1633" y="50" font-size="18" fill="#40ffff">华融化学</text>
<rect x="1706" y="42" width="23" height="11" fill="#b07020"/><text x="1707" y="52" font-size="11" fill="#fff">拉升</text>
<text x="1729" y="51" font-size="13" fill="#c0c0c0">301256</text><text x="1780" y="45" font-size="11" fill="#ff3232">R</text>
<g font-weight="bold" font-size="18" fill="#ff3232"><text x="1618" y="78.500">14.64</text><text x="1716" y="78.500">▲0.90</text><text x="1892" y="78.500" text-anchor="end">6.55%</text></g>

<!-- Order book -->
<g>
<text x="1617" y="102" class="l">卖五</text><text x="1617" y="120" class="l">卖四</text><text x="1617" y="138" class="l">卖三</text><text x="1617" y="156" class="l">卖二</text><text x="1617" y="174" class="l">卖一</text>
<text x="1617" y="194" class="l">买一</text><text x="1617" y="212" class="l">买二</text><text x="1617" y="230" class="l">买三</text><text x="1617" y="248" class="l">买四</text><text x="1617" y="266" class="l">买五</text>
<text x="1752" y="101" class="n end r">14.70</text><text x="1752" y="119" class="n end r">14.69</text><text x="1752" y="137" class="n end r">14.68</text><text x="1752" y="155" class="n end r">14.65</text><text x="1752" y="173" class="n end r">14.64</text>
<text x="1752" y="193" class="n end r">14.63</text><text x="1752" y="211" class="n end r">14.62</text><text x="1752" y="229" class="n end r">14.61</text><text x="1752" y="247" class="n end r">14.60</text><text x="1752" y="265" class="n end r">14.59</text>
<text x="1893" y="101" class="n end y">272</text><text x="1893" y="119" class="n end y">100</text><text x="1893" y="137" class="n end y">12</text><text x="1893" y="155" class="n end y">10</text><text x="1893" y="173" class="n end y">2245</text>
<text x="1893" y="193" class="n end y">299</text><text x="1893" y="211" class="n end y">57</text><text x="1893" y="229" class="n end y">5</text><text x="1893" y="247" class="n end y">171</text><text x="1893" y="265" class="n end y">140</text>
</g>

<!-- Stats -->
<g>
<text x="1617" y="288" class="l">今开</text><text x="1617" y="306" class="l">最高</text><text x="1617" y="325" class="l">最低</text><text x="1617" y="344" class="l">现量</text><text x="1617" y="363" class="l">外盘</text>
<text x="1757" y="288" class="l">均价</text><text x="1757" y="306" class="l">量比</text><text x="1757" y="325" class="l">市值</text><text x="1757" y="344" class="l">总量</text><text x="1757" y="363" class="l">内盘</text>
<text x="1752" y="287" class="n end r">14.00</text><text x="1752" y="305" class="n end r">15.66</text><text x="1752" y="324" class="n end r">14.00</text><text x="1752" y="343" class="n end m">9964</text><text x="1752" y="362" class="n end r">430790</text>
<text x="1893" y="287" class="n end r">14.79</text><text x="1893" y="305" class="n end m">3.47</text><text x="1893" y="324" class="n end g">70.3亿</text><text x="1893" y="343" class="n end g">771427</text><text x="1893" y="362" class="n end gr">340637</text>
<text x="1617" y="384" class="l">换手</text><text x="1617" y="403" class="l">净资</text><text x="1617" y="421" class="l">收益㈢</text>
<text x="1757" y="384" class="l">股本</text><text x="1757" y="403" class="l">流通</text><text x="1757" y="421" class="l">PE(动)</text>
<text x="1752" y="383" class="n end g">16.07%</text><text x="1752" y="402" class="n end g">3.56</text><text x="1752" y="420" class="n end g">0.110</text>
<text x="1893" y="383" class="n end g">4.80亿</text><text x="1893" y="402" class="n end g">4.80亿</text><text x="1893" y="420" class="n end g">99.2</text>
<text x="1616" y="446" class="l" textLength="211" lengthAdjust="spacing">注册制 已盈利 表决权无差异</text>
<text x="1616" y="465" class="l">交易状态: 闭市阶段 <tspan class="n g">15:30:00</tspan></text>
<text x="1616" y="484" class="l">盘后交易量: <tspan class="n g">6</tspan>  额: <tspan class="n g">8784.00</tspan></text>
<rect x="1881.500" y="472.500" width="11" height="11" fill="none" stroke="#c03020"/><path d="M1884 482v-4M1887 482v-7M1890 482v-5" stroke="#c03020"/>
<text x="1617" y="504" class="l" style="font-size:17px">主力净额</text>
<rect x="1688.500" y="492.500" width="11" height="11" rx="2" fill="#333" stroke="#888"/><path d="M1691 495h6M1691 498h6M1691 501h6" stroke="#999"/>
<rect x="1709" y="495" width="70" height="7" fill="#00e000"/>
<text x="1854" y="503" class="n end gr">-3039万</text><text x="1893" y="503" class="n end gr">-3%</text>
</g>

<!-- Ticks -->
<g>
<text x="1617" y="526" class="n g">14:55</text><text x="1617" y="544" class="n g">14:56</text><text x="1617" y="904" class="n g">14:57</text><text x="1617" y="922" class="n g">15:00</text><text x="1617" y="940" class="n g">15:09</text><text x="1617" y="958" class="n g">15:13</text><text x="1617" y="976" class="n g">15:25</text>
<text x="1753" y="526" class="n end r">14.35</text><text x="1753" y="544" class="n end r">14.34</text><text x="1753" y="562" class="n end r">14.34</text><text x="1753" y="580" class="n end r">14.35</text><text x="1753" y="598" class="n end r">14.34</text><text x="1753" y="616" class="n end r">14.34</text><text x="1753" y="634" class="n end r">14.38</text><text x="1753" y="652" class="n end r">14.36</text><text x="1753" y="670" class="n end r">14.36</text><text x="1753" y="688" class="n end r">14.37</text><text x="1753" y="706" class="n end r">14.40</text><text x="1753" y="724" class="n end r">14.40</text><text x="1753" y="742" class="n end r">14.41</text><text x="1753" y="760" class="n end r">14.43</text><text x="1753" y="778" class="n end r">14.43</text><text x="1753" y="796" class="n end r">14.46</text><text x="1753" y="814" class="n end r">14.46</text><text x="1753" y="832" class="n end r">14.46</text><text x="1753" y="850" class="n end r">14.49</text><text x="1753" y="868" class="n end r">14.47</text><text x="1753" y="886" class="n end r">14.57</text><text x="1753" y="904" class="n end r">14.58</text><text x="1753" y="922" class="n end r">14.64</text><text x="1753" y="940" class="n end r">14.64</text><text x="1753" y="958" class="n end r">14.64</text><text x="1753" y="976" class="n end r">14.64</text>
<text x="1834" y="526" class="n end y">218</text><text x="1834" y="544" class="n end y">309</text><text x="1834" y="562" class="n end m">518</text><text x="1834" y="580" class="n end y">190</text><text x="1834" y="598" class="n end y">260</text><text x="1834" y="616" class="n end y">463</text><text x="1834" y="634" class="n end m">2185</text><text x="1834" y="652" class="n end y">120</text><text x="1834" y="670" class="n end y">157</text><text x="1834" y="688" class="n end y">126</text><text x="1834" y="706" class="n end y">215</text><text x="1834" y="724" class="n end y">236</text><text x="1834" y="742" class="n end y">358</text><text x="1834" y="760" class="n end y">168</text><text x="1834" y="778" class="n end y">146</text><text x="1834" y="796" class="n end y">105</text><text x="1834" y="814" class="n end y">12</text><text x="1834" y="832" class="n end y">72</text><text x="1834" y="850" class="n end y">204</text><text x="1834" y="868" class="n end y">286</text><text x="1834" y="886" class="n end y">62</text><text x="1834" y="904" class="n end y">139</text><text x="1834" y="922" class="n end m">9964</text><text x="1834" y="940" class="n end y">3</text><text x="1834" y="958" class="n end y">1</text><text x="1834" y="976" class="n end y">2</text>
<g font-size="14" text-anchor="middle">
<text x="1856" y="526" fill="#00e000">S</text><text x="1856" y="544" fill="#00e000">S</text><text x="1856" y="562" fill="#00e000">S</text><text x="1856" y="580" fill="#ff3232">B</text><text x="1856" y="598" fill="#00e000">S</text><text x="1856" y="616" fill="#00e000">S</text><text x="1856" y="634" fill="#ff3232">B</text><text x="1856" y="652" fill="#00e000">S</text><text x="1856" y="670" fill="#ff3232">B</text><text x="1856" y="688" fill="#00e000">S</text><text x="1856" y="706" fill="#ff3232">B</text><text x="1856" y="724" fill="#ff3232">B</text><text x="1856" y="742" fill="#ff3232">B</text><text x="1856" y="760" fill="#ff3232">B</text><text x="1856" y="778" fill="#ff3232">B</text><text x="1856" y="796" fill="#ff3232">B</text><text x="1856" y="814" fill="#ff3232">B</text><text x="1856" y="832" fill="#ff3232">B</text><text x="1856" y="850" fill="#ff3232">B</text><text x="1856" y="868" fill="#00e000">S</text><text x="1856" y="886" fill="#ff3232">B</text><text x="1856" y="904" fill="#ff3232">B</text><text x="1856" y="940" fill="#c0c0c0">P</text><text x="1856" y="958" fill="#c0c0c0">P</text><text x="1856" y="976" fill="#c0c0c0">P</text>
</g>
<g>
<text x="1893" y="526" class="n end" fill="#808080">37</text><text x="1893" y="544" class="n end" fill="#808080">26</text><text x="1893" y="562" class="n end" fill="#808080">32</text><text x="1893" y="580" class="n end" fill="#808080">13</text><text x="1893" y="598" class="n end" fill="#808080">20</text><text x="1893" y="616" class="n end" fill="#808080">52</text><text x="1893" y="634" class="n end" fill="#808080">90</text><text x="1893" y="652" class="n end" fill="#808080">12</text><text x="1893" y="670" class="n end" fill="#808080">11</text><text x="1893" y="688" class="n end" fill="#808080">15</text><text x="1893" y="706" class="n end" fill="#808080">21</text><text x="1893" y="724" class="n end" fill="#808080">22</text><text x="1893" y="742" class="n end" fill="#808080">40</text><text x="1893" y="760" class="n end" fill="#808080">31</text><text x="1893" y="778" class="n end" fill="#808080">16</text><text x="1893" y="796" class="n end" fill="#808080">12</text><text x="1893" y="814" class="n end" fill="#808080">2</text><text x="1893" y="832" class="n end" fill="#808080">21</text><text x="1893" y="850" class="n end" fill="#808080">20</text><text x="1893" y="868" class="n end" fill="#808080">27</text><text x="1893" y="886" class="n end" fill="#808080">17</text><text x="1893" y="904" class="n end" fill="#808080">14</text><text x="1893" y="922" class="n end" fill="#808080">540</text><text x="1893" y="940" class="n end" fill="#808080">2</text><text x="1893" y="958" class="n end" fill="#808080">1</text><text x="1893" y="976" class="n end" fill="#808080">1</text>
</g>
</g>

<!-- Bottom right tabs -->
<path d="M1644.500 987v18M1676.500 987v18M1706.500 987v18M1737.500 987v18M1768.500 987v18M1799.500 987v18M1830.500 987v18M1862.500 987v18" stroke="#b00000" shape-rendering="crispEdges"/>
<g font-size="13" text-anchor="middle" fill="#b8b8b8"><text x="1629" y="1002" fill="#40ffff">笔</text><text x="1660" y="1002">价</text><text x="1691" y="1002">细</text><text x="1721" y="1002">势</text><text x="1752" y="1002">联</text><text x="1783" y="1002">值</text><text x="1814" y="1002">主</text><text x="1846" y="1002">逆</text><text x="1878" y="1002">筹</text></g>

<!-- Top toolbar -->
<rect x="0" y="31" width="1614" height="20" fill="#000"/>
<rect x="5" y="35" width="11" height="13" rx="2" fill="#444" stroke="#999"/><rect x="7" y="37" width="4" height="9" fill="#aaa"/>
<path d="M22.500 31V51" stroke="#b00000" shape-rendering="crispEdges"/>
<g font-size="12" fill="#a8a8a8">
<text x="27" y="46">分时</text><text x="61" y="46">1分钟</text><text x="100" y="46">5分钟</text><text x="139" y="46">15分钟</text><text x="185" y="46">30分钟</text><text x="231" y="46">60分钟</text><text x="277" y="46" fill="#30a8d8">日线</text><text x="311" y="46">周线</text><text x="345" y="46">月线</text><text x="378" y="46">10分钟</text><text x="424" y="46">45日线</text><text x="470" y="46">季线</text><text x="505" y="46">年线</text><text x="542" y="46">5秒</text><text x="573" y="46">15秒</text><text x="606" y="46">多周期</text><text x="650" y="46">更多</text>
<text x="1303" y="46">复权</text><text x="1338" y="46">叠加</text><text x="1372" y="46">多股</text><text x="1408" y="46">统计</text><text x="1443" y="46">画线</text><text x="1480" y="46">F10</text><text x="1513" y="46">标记</text><text x="1545" y="46">-自选</text><text x="1584" y="46">返回</text>
</g>
<path d="M678 36l5 5-5 5" stroke="#a8a8a8" fill="none"/>
<path d="M1298.500 31v20M1333.500 31v20M1367.500 31v20M1403.500 31v20M1438.500 31v20M1472.500 31v20M1507.500 31v20M1543.500 31v20M1578.500 31v20" stroke="#b00000" shape-rendering="crispEdges"/>

<!-- Title bar -->
<rect width="1920" height="30" fill="#3f4759"/>
<rect y="30" width="1920" height="1" fill="#222"/>
<path d="M34 7.500A11 11 0 1 0 34 22.500" fill="none" stroke="#eef0f3" stroke-width="2.500"/>
<path d="M36 9.500H25c-6 0-6 5.500 0 5.500h5c6 0 6 5.500 0 5.500H19" fill="none" stroke="#eef0f3" stroke-width="3"/>
<text x="41" y="21" font-size="15" font-weight="bold" fill="#e8e8ea">国盛睿</text>
<g font-size="14" fill="#e6e6e6">
<text x="152" y="20">首页</text><text x="206" y="20">自选</text><text x="260" y="20">行情</text><text x="314" y="20">发现</text><text x="363" y="20">数据</text><text x="416" y="20">资讯</text><text x="470" y="20">交易</text><text x="522" y="20">理财商城</text><text x="600" y="20">业务办理</text><text x="678" y="20">国盛特色</text><text x="756" y="20">账户分析</text><text x="834" y="20">条件单</text>
</g>
<g fill="#2a303e">
<rect x="1694" y="5" width="20" height="19" rx="4"/><rect x="1723" y="5" width="20" height="19" rx="4"/><rect x="1750" y="5" width="20" height="19" rx="4"/><rect x="1778" y="5" width="20" height="19" rx="4"/><rect x="1806" y="5" width="20" height="19" rx="4"/><rect x="1834" y="5" width="20" height="19" rx="4"/><rect x="1862" y="5" width="20" height="19" rx="4"/><rect x="1890" y="5" width="20" height="19" rx="4"/>
</g>
<g stroke="#c4cad6" fill="none" stroke-width="1.500">
<circle cx="1704" cy="14" r="5"/><path d="M1702 14h4M1704 19h3"/>
<path d="M1728 11h10M1728 17h10M1735 8v6M1731 14v6"/>
<path d="M1761 8c-3 0-3 3-4 6s-1 5-3 5M1754 12h6M1758 13l6 6M1764 13l-6 6"/>
<rect x="1783" y="8" width="10" height="7"/><path d="M1785 19h6"/>
<path d="M1812 8h8l2 4-2 1v6h-8v-6l-2-1z"/>
<path d="M1840 19h8" stroke-width="2"/>
<path d="M1872 9v5M1872 15v5M1868 14h3M1873 14h3" stroke-width="2"/>
<path d="M1896 9l8 10M1904 9l-8 10" stroke-width="2"/>
</g>

<!-- News bar -->
<rect x="0" y="1006" width="1895" height="22" fill="#31363f"/>
<g class="news">
<text x="5" y="1021" class="news">关于调整公司向不特定合格投资者公开发行股票并</text>
<text x="309" y="1021" class="news" textLength="372" lengthAdjust="spacingAndGlyphs">商务部：希望荷方切实采取实际行动，迅速且有效推动安世半导体问题</text>
<text x="721" y="1021" class="news" textLength="371" lengthAdjust="spacingAndGlyphs">五星传奇（872068）：可能被终止股票挂牌暨停牌进展的风险提示公告</text>
<text x="1133" y="1021" class="news" textLength="354" lengthAdjust="spacingAndGlyphs">盈利拐点已现！金山云Q3调整后净利润实现转正 布局黄金窗口开启</text>
<text x="1527" y="1021" class="news" textLength="299" lengthAdjust="spacingAndGlyphs">瑞银：将2026年中现货黄金价格上行预期上调至4900美元</text>
<text x="1867" y="1021" class="news">谷歌I</text>
</g>
<!-- Status bar -->
<rect x="0" y="1028" width="1895" height="22" fill="#1c2127"/>
<circle cx="12" cy="1039" r="5.500" fill="#667"/><path d="M9 1038l3 3 3-3" stroke="#1c2127" fill="none"/>
<g>
<text x="25" y="1044" class="st">上证</text><text x="61" y="1044" class="sg">3931.05</text><text x="130" y="1044" class="sg">-15.69</text><text x="184" y="1044" class="sg">-0.40%</text><text x="240" y="1044" class="st">7113亿</text>
<text x="299.500" y="1044" class="st">深证</text><text x="335" y="1044" class="sg">12980.82</text><text x="403" y="1044" class="sg">-99.27</text><text x="458" y="1044" class="sg">-0.76%</text><text x="514" y="1044" class="st">9968亿</text>
<text x="574" y="1044" class="st">创业</text><text x="610" y="1044" class="sg">3042.34</text><text x="678.600" y="1044" class="sg">-34.51</text><text x="733" y="1044" class="sg">-1.12%</text><text x="788" y="1044" class="st">4521亿</text>
<text x="852.500" y="1044" class="st">总成交</text><text x="902" y="1044" class="st">17228亿</text>
</g>
<circle cx="971" cy="1039" r="5" fill="none" stroke="#778" stroke-width="2"/>
<rect x="984" y="1032" width="12" height="14" rx="3" fill="#556"/><text x="987" y="1044" font-size="12" fill="#e8e8e8">2</text>
<text x="1001.500" y="1044" class="st">已连接</text>
<rect x="1725" y="1033" width="16" height="10" rx="2" fill="#778"/><path d="M1728 1036h10M1728 1039h10" stroke="#1c2127"/>
<path d="M1758 1034h4v10h-4zM1764 1032h4v10h-4z" fill="#778"/>
<circle cx="1793" cy="1039" r="6" fill="none" stroke="#667" stroke-width="2"/><circle cx="1793" cy="1039" r="2" fill="#667"/>
<path d="M1817 1033v3h2v8h-2v2h12v-2h-2v-8h2v-3h-2v2h-2v-2h-2v2h-2v-2z" fill="#f0f0f0"/>
<text x="1845" y="1044" fill="#9cc8d8" style="font-family:'Liberation Mono',monospace;font-size:13px" textLength="47">17:21:56</text>

<!-- Sidebar -->
<rect x="1895" y="31" width="25" height="1019" fill="#f0f0f0"/>
<g fill="none" stroke="#3a80e0" stroke-width="1.200">
<path d="M1900 42l7-7v4h8v7h-8v4z"/>
<path d="M1908 57l7 7h-4v8h-6v-8h-4z"/>
<path d="M1908 96l7-7h-4v-8h-6v8h-4z"/>
<rect x="1900.500" y="103.500" width="15" height="15" fill="#fff"/>
<rect x="1900.500" y="126.500" width="15" height="14" fill="#fff"/>
<rect x="1900.500" y="149.500" width="15" height="14" fill="#fff"/>
<rect x="1900.500" y="172.500" width="15" height="14" fill="#fff"/>
<rect x="1904.500" y="196.500" width="11" height="10" fill="#fff"/><rect x="1900.500" y="200.500" width="11" height="10" fill="#fff"/>
<rect x="1900.500" y="220.500" width="15" height="14" fill="#fff"/>
<rect x="1900.500" y="243.500" width="15" height="14" fill="#fff"/>
<rect x="1900.500" y="265.500" width="15" height="14" fill="#fff"/>
<rect x="1900.500" y="289.500" width="15" height="14" fill="#fff"/>
<rect x="1900.500" y="311.500" width="15" height="14" fill="#fff"/>
<rect x="1900.500" y="334.500" width="15" height="14" fill="#fff"/>
<circle cx="1908" cy="341.500" r="4"/>
<rect x="1900.500" y="365.500" width="15" height="13" fill="#fff"/>
<rect x="1900.500" y="488.500" width="15" height="14" fill="#fff"/>
<rect x="1900.500" y="511.500" width="15" height="14" fill="#fff"/>
</g>
<path d="M1902 107h5M1902 110h5M1902 113h5" stroke="#2a9a2a"/><path d="M1909 107h5M1909 110h5" stroke="#e03020"/><path d="M1909 113l5 3" stroke="#888"/>
<path d="M1902 130h3v8h-3zM1906 130h3v8h-3zM1910 130h3v8h-3z" fill="#2060c0"/><path d="M1902 133h11" stroke="#e03020"/><path d="M1902 136h11" stroke="#20a020"/>
<path d="M1902 161l4-4 2 2 6-5" stroke="#e03020" fill="none"/>
<path d="M1904 176v8" stroke="#20a020" stroke-width="2"/><path d="M1908 174v8M1912 175v7" stroke="#e03020" stroke-width="2"/>
<path d="M1903 204h6M1903 206h6M1903 208h6" stroke="#555"/>
<text x="1902" y="232" font-size="10" font-weight="bold" fill="#2050b0">F10</text>
<path d="M1903 246h5v3h-5zM1908 250h5v3h-5z" fill="#f0c040"/>
<path d="M1904 269h8v8h-8z" fill="none" stroke="#e07020"/><path d="M1905 272h6M1905 274h6" stroke="#e07020"/>
<text x="1902" y="300" font-size="10" fill="#2050b0">FIZ</text>
<text x="1902" y="322" font-size="10" font-style="italic" fill="#106060">fx</text>
<path d="M1897 357.500H1916M1897 480.500H1916" stroke="#bbb"/>
<path d="M1902 372l2-2 2 2 2-2 2 2 2-2 2 2M1902 375l2-2 2 2 2-2 2 2 2-2 2 2" stroke="#c03030" fill="none"/>
<text x="1900" y="399" font-size="10" font-weight="bold" fill="#2060d0">RSI</text>
<text x="1902" y="425" font-size="17" font-weight="bold" fill="#c03030">S</text>
<path d="M1908 434l3 4h-2v3h3v-2l4 3-4 3v-2h-3v3h2l-3 4-3-4h2v-3h-3v2l-4-3 4-3v2h3v-3h-2z" fill="#1060d0"/>
<path d="M1902 470l1-4 9-9 3 3-9 9z" fill="#e8a040" stroke="#a06020"/>
<text x="1902" y="499" font-size="10" fill="#2050b0">F5</text>
<path d="M1903 518a5 5 0 0 1 9-2M1913 519a5 5 0 0 1-9 2" stroke="#30a040" stroke-width="2" fill="none"/>
<rect x="1896.500" y="645.500" width="23" height="23" fill="#f8f8f8" stroke="#bbb"/>
<g font-size="12" fill="#2050b0" text-anchor="middle">
<text x="1907" y="545">1</text><text x="1907" y="568">5</text><text x="1908" y="591">15</text><text x="1908" y="614">30</text><text x="1908" y="637">60</text>
<text x="1908" y="729">N</text>
</g>
<g font-size="13" fill="#2050b0" text-anchor="middle">
<text x="1908" y="662">日</text><text x="1908" y="684">周</text><text x="1908" y="708">月</text><text x="1908" y="753">多</text><text x="1908" y="777">季</text><text x="1908" y="799">年</text>
</g>
</svg>
</body></html>
